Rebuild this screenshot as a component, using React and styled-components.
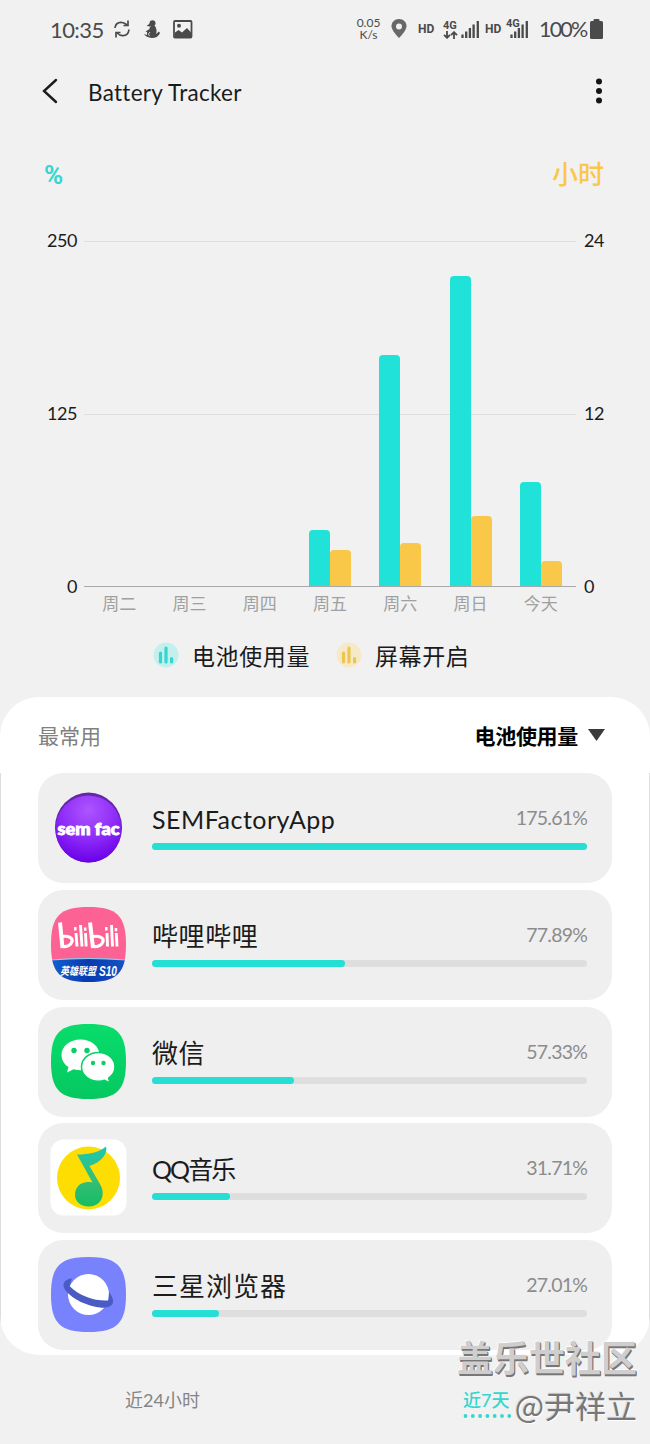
import styled, { createGlobalStyle } from "styled-components";

const days = [
	{ name: "周二", battery: 0, screen: 0 },
	{ name: "周三", battery: 0, screen: 0 },
	{ name: "周四", battery: 0, screen: 0 },
	{ name: "周五", battery: 56, screen: 36 },
	{ name: "周六", battery: 231, screen: 43 },
	{ name: "周日", battery: 310, screen: 70 },
	{ name: "今天", battery: 104, screen: 25 }
];

const squircle = "M37.5 0C66 0 75 9 75 37.5S66 75 37.5 75 0 66 0 37.5 9 0 37.5 0Z";

const SemIcon = () => (
	<svg width="75" height="75" viewBox="0 0 75 75">
		<defs>
			<radialGradient id="sem" cx="50%" cy="22%" r="78%">
				<stop offset="0" stopColor="#ac55ff" />
				<stop offset="0.55" stopColor="#8e2bf8" />
				<stop offset="1" stopColor="#6a00e8" />
			</radialGradient>
		</defs>
		<ellipse cx="37.5" cy="37.5" rx="33.5" ry="35" fill="#6527a8" />
		<ellipse cx="37.5" cy="39" rx="33" ry="33.5" fill="url(#sem)" />
		<text x="37.5" y="44.5" textAnchor="middle" textLength="62" lengthAdjust="spacingAndGlyphs" fill="#fff" stroke="#fff" strokeWidth="0.9" fontFamily="Lato, sans-serif" fontWeight="900" fontSize="16.5">
			sem fac
		</text>
	</svg>
);

const BiliIcon = () => (
	<svg width="75" height="75" viewBox="0 0 75 75">
		<defs>
			<clipPath id="biliClip">
				<path d={squircle} />
			</clipPath>
			<linearGradient id="biliBlue" x1="0" x2="1">
				<stop offset="0" stopColor="#0f62d0" />
				<stop offset="0.5" stopColor="#0a39ae" />
				<stop offset="1" stopColor="#0f56c8" />
			</linearGradient>
		</defs>
		<g clipPath="url(#biliClip)">
			<rect width="75" height="75" fill="#fc6293" />
			<path d="M0 53Q37 50 75 53V75H0Z" fill="url(#biliBlue)" />
			<path d="M0 53Q37 50 75 53" fill="none" stroke="#8ccdf5" strokeWidth="1.2" />
		</g>
		<g fill="none" stroke="#fff">
			<path d="M9 15.5L11.5 41M39 15.5L42 41" strokeWidth="4" />
			<path d="M11 29.5C18 28.5 22 31 21 34.5S16 40 11 39.5M42 29.5C49 28.5 53 31 52 34.5S47 40 42 39.5" strokeWidth="3.2" />
			<path d="M25 26L26 39.5M29.5 18L31 39.5M34.5 26L35.2 39.5M56 26L56.5 39.5M60.500 18L61.500 39.500M65.300 26L66 39.500" strokeWidth="2.900" />
			<path d="M24.300 20V23.500M34.200 20.500V23.800M55.300 20V23.500M65 21V24.300" strokeWidth="2.500" />
		</g>
		<text x="9" y="67.500" textLength="36" lengthAdjust="spacingAndGlyphs" fill="#fff" fontFamily="Noto Sans CJK SC, sans-serif" fontWeight="700" fontStyle="italic" fontSize="11">
			英雄联盟
		</text>
		<text x="48" y="69" textLength="18" lengthAdjust="spacingAndGlyphs" fill="#fff" fontFamily="Liberation Sans, sans-serif" fontWeight="700" fontStyle="italic" fontSize="15.500">
			S10
		</text>
	</svg>
);

const WechatIcon = () => (
	<svg width="75" height="75" viewBox="0 0 75 75">
		<defs>
			<linearGradient id="wx" x2="0" y2="1">
				<stop offset="0" stopColor="#08dd6b" />
				<stop offset="1" stopColor="#05c860" />
			</linearGradient>
		</defs>
		<path d={squircle} fill="url(#wx)" />
		<path d="M29.500 15.500C18.800 15.500 10.500 22.300 10.500 31C10.500 36 13.200 40.200 17.500 43L16 48.500L22.500 45.300Q26 46.300 30 46.300C40 46 48.500 39.500 48.500 31C48.500 22.300 40 15.500 29.500 15.500Z" fill="#fff" />
		<path d="M47.500 28.500C38 28.500 30.500 34.800 30.500 43C30.500 51 38 57.200 47.500 57.200Q50.500 57.200 53.500 56.300L59 59L57.600 54C61.500 51.300 64 47.300 64 43C64 34.800 57 28.500 47.500 28.500Z" fill="#fff" stroke="#06d166" strokeWidth="1.500" />
		<g fill="#07cf65">
			<circle cx="23" cy="26.500" r="2.700" />
			<circle cx="36" cy="26.500" r="2.700" />
			<circle cx="42" cy="39" r="2.200" />
			<circle cx="52.500" cy="39" r="2.200" />
		</g>
	</svg>
);

const MusicIcon = () => (
	<svg width="77" height="77" viewBox="0 0 77 77">
		<defs>
			<linearGradient id="note" x2="0" y2="1">
				<stop offset="0" stopColor="#1dc8b0" />
				<stop offset="0.550" stopColor="#35be78" />
				<stop offset="1" stopColor="#15bd62" />
			</linearGradient>
		</defs>
		<rect x="0.500" y="0.500" width="76" height="76" rx="13" fill="#fff" />
		<circle cx="38.500" cy="39" r="31.500" fill="#fedd02" />
		<path d="M56 7.500C58 14 52 23 39.500 27L50.500 46C56 56 51 67.500 39 67.500C30 67.500 25 62 25 56C25 47 32 41.500 42.500 43.500L27 15.500C39 15.500 49 13.500 56 7.500Z" fill="url(#note)" />
	</svg>
);

const BrowserIcon = () => (
	<svg width="75" height="75" viewBox="0 0 75 75">
		<path d={squircle} fill="#7782fc" />
		<circle cx="37.500" cy="37.500" r="20.500" fill="#fff" />
		<path d="M21 21.500C12 22.500 10.500 28 15 34C22 42.500 36 49 49 50.500C58 51.500 63 48 62 43.500C61.500 40 60 37.500 58 35L57.500 43.500C45 44.500 28 39 18.500 29Z" fill="#4a5bc4" />
	</svg>
);

const apps = [
	{ name: "SEMFactoryApp", percent: "175.61%", fill: 100, icon: <SemIcon />, size: 25, spacing: 0.5 },
	{ name: "哔哩哔哩", percent: "77.89%", fill: 44.3, icon: <BiliIcon />, size: 26, spacing: 0.6 },
	{ name: "微信", percent: "57.33%", fill: 32.7, icon: <WechatIcon />, size: 26, spacing: 0.4 },
	{ name: "QQ音乐", percent: "31.71%", fill: 18, icon: <MusicIcon />, size: 25, spacing: -1.9 },
	{ name: "三星浏览器", percent: "27.01%", fill: 15.4, icon: <BrowserIcon />, size: 26, spacing: 1 }
];

const SignalBars = () => (
	<svg width="19" height="20" viewBox="0 0 19 20" stroke="#4a4a4a" strokeWidth="2.300">
		<path d="M1.500 15.500V19M5.200 12.500V19M8.900 9V19M12.600 5.500V19M16.800 2V19" />
	</svg>
);

const LegendMark = ({ color, back }) => (
	<svg width="26" height="26" viewBox="0 0 26 26">
		<circle cx="13" cy="13" r="12.500" fill={back} />
		<path d="M7.500 11V20M13 6V20M18.600 16.500V20" stroke={color} strokeWidth="3.200" strokeLinecap="round" />
	</svg>
);

export default function App() {
	return (
		<>
			<GlobalStyle />
			<Screen>
				<StatusBar>
					<Clock>10:35</Clock>
					<svg width="18" height="18" viewBox="0 0 18 18" fill="none" stroke="#4a4a4a" strokeWidth="1.700">
						<path d="M2 8C2.500 4 5.500 2.200 9 2.500Q11.500 2.800 14 5M16 9.500C15.500 13.500 13 15.800 9.500 15.600Q6.500 15.400 4 13" />
						<path d="M3 17.500V12.500H7.500M15 0.500V5.500H10.500" />
					</svg>
					<Goose width="16" height="19" viewBox="0 0 16 19">
						<circle cx="8.500" cy="3.200" r="3" fill="#4a4a4a" />
						<path d="M6.500 3L2.500 6L7 6.500ZM6 6H11Q13.500 10 12 14L15 11.500L16 13Q14 18 8 18Q2 17.500 0 14L3 15V12L1.500 11.500L5.500 9Z" fill="#4a4a4a" />
						<path d="M6 12Q3 14 5.500 16" fill="none" stroke="#f1f1f1" strokeWidth="0.800" />
					</Goose>
					<svg width="20" height="19" viewBox="0 0 20 19">
						<rect x="1" y="1" width="17.500" height="16.500" rx="1" fill="none" stroke="#4a4a4a" strokeWidth="1.800" />
						<circle cx="6" cy="5.800" r="2" fill="#4a4a4a" />
						<path d="M2 12.500L5.500 10L9 12.500L14 8L18 12.500V17H2Z" fill="#4a4a4a" />
					</svg>
					<StatusRight>
						<Speed>
							<span>0.05</span>
							<span>K/s</span>
						</Speed>
						<Pin width="16" height="20" viewBox="0 0 16 20">
							<path d="M8 0C3.500 0 0.500 3.300 0.500 7.300C0.500 12 8 19 8 19S15.500 12 15.500 7.300C15.500 3.300 12.500 0 8 0Z" fill="#686868" />
							<circle cx="8" cy="7.500" r="3" fill="#f1f1f1" />
						</Pin>
						<Hd>HD</Hd>
						<Network>
							<Generation>4G</Generation>
							<svg width="15" height="8" viewBox="0 0 15 8" fill="none" stroke="#4a4a4a" strokeWidth="1.800">
								<path d="M4 0V7M1 3.800L4 6.800L7 3.800M11 8V1M8 4.200L11 1.200L14 4.200" />
							</svg>
						</Network>
						<SignalBars />
						<Hd $second>HD</Hd>
						<Overlap>
							<Generation $over>4G</Generation>
							<SignalBars />
						</Overlap>
						<Charge>100%</Charge>
						<svg width="13" height="20" viewBox="0 0 13 20" fill="#4a4a4a">
							<rect y="2" width="13" height="18" rx="1.500" />
							<rect x="3.500" width="6" height="4" rx="1" />
						</svg>
					</StatusRight>
				</StatusBar>

				<TitleBar>
					<svg width="16" height="26" viewBox="0 0 16 26" fill="none" stroke="#1b1b1b" strokeWidth="2.400" strokeLinecap="round">
						<path d="M14 2L2 13L14 24" />
					</svg>
					<Title>Battery Tracker</Title>
					<svg width="8" height="26" viewBox="0 0 8 26" fill="#151515">
						<circle cx="4" cy="3.500" r="3" />
						<circle cx="4" cy="13" r="3" />
						<circle cx="4" cy="22.500" r="3" />
					</svg>
				</TitleBar>

				<Units>
					<Percent>%</Percent>
					<Hours>小时</Hours>
				</Units>

				<Chart>
					<Axis $align="right">
						<span>250</span>
						<span>125</span>
						<span>0</span>
					</Axis>
					<Plot>
						{days.map((day) => (
							<Day key={day.name}>
								<Bar $color="#20e2d9" style={{ height: day.battery }} />
								<Bar $color="#fac848" style={{ height: day.screen }} />
							</Day>
						))}
					</Plot>
					<Axis>
						<span>24</span>
						<span>12</span>
						<span>0</span>
					</Axis>
				</Chart>
				<DayNames>
					{days.map((day) => (
						<span key={day.name}>{day.name}</span>
					))}
				</DayNames>

				<Legend>
					<LegendMark color="#35d6cf" back="#c3f0ec" />
					<LegendText>电池使用量</LegendText>
					<LegendMark color="#edc550" back="#f6e9c8" />
					<LegendText>屏幕开启</LegendText>
				</Legend>

				<Sheet>
					<SheetHeader>
						<Most>最常用</Most>
						<Sort>
							电池使用量
							<svg width="17" height="12" viewBox="0 0 17 12" fill="#3b3b3b">
								<path d="M0 0H17L8.500 12Z" />
							</svg>
						</Sort>
					</SheetHeader>
					<AppList>
						{apps.map((app) => (
							<AppCard key={app.name}>
								<AppIcon>{app.icon}</AppIcon>
								<AppInfo>
									<AppLine>
										<AppName $size={app.size} $spacing={app.spacing}>
											{app.name}
										</AppName>
										<AppPercent>{app.percent}</AppPercent>
									</AppLine>
									<Track>
										<Fill style={{ width: `${app.fill}%` }} />
									</Track>
								</AppInfo>
							</AppCard>
						))}
					</AppList>
				</Sheet>

				<Tabs>
					<Tab>近24小时</Tab>
					<ActiveTab>
						近7天
						<svg width="50" height="4" viewBox="0 0 50 4" fill="#35d6cf">
							{[0, 1, 2, 3, 4, 5, 6].map((i) => (
								<circle key={i} cx={2.5 + i * 7.3} cy="2" r="1.900" />
							))}
						</svg>
					</ActiveTab>
				</Tabs>

				<Watermark>
					<Community>盖乐世社区</Community>
					<Author>@尹祥立</Author>
				</Watermark>
			</Screen>
		</>
	);
}

const GlobalStyle = createGlobalStyle`
	body {
		margin: 0;
		background: #f1f1f1;
	}

	* {
		box-sizing: border-box;
	}

	svg {
		display: block;
		flex: none;
	}
`;

const Screen = styled.div`
	position: relative;
	width: 650px;
	height: 1444px;
	overflow: hidden;
	background: #f1f1f1;
	color: #1b1b1b;
	font-family: Lato, "Noto Sans CJK SC", sans-serif;
	font-weight: 400;
	white-space: nowrap;
`;

const StatusBar = styled.div`
	display: flex;
	align-items: center;
	height: 58px;
	padding: 0 47px 0 50px;
	color: #4a4a4a;
`;

const Clock = styled.div`
	width: 63px;
	font-size: 22px;
	letter-spacing: -0.6px;
`;

const Goose = styled.svg`
	margin: 0 13px 0 13px;
`;

const StatusRight = styled.div`
	display: flex;
	align-items: center;
	margin-left: auto;
`;

const Speed = styled.div`
	display: flex;
	flex-direction: column;
	align-items: center;
	width: 25px;
	font-size: 12px;
	line-height: 12px;
`;

const Pin = styled.svg`
	margin: 0 11px 0 10px;
`;

const Hd = styled.div`
	width: ${(props) => (props.$second ? "21px" : "25px")};
	margin-left: ${(props) => (props.$second ? "5px" : "0")};
	font-family: Roboto, sans-serif;
	font-size: 12px;
	font-weight: 700;
	line-height: 16px;
`;

const Network = styled.div`
	display: flex;
	flex-direction: column;
	width: 18px;
`;

const Generation = styled.div`
	position: ${(props) => (props.$over ? "absolute" : "static")};
	left: 0;
	top: -1px;
	font-family: Roboto, sans-serif;
	font-size: 11px;
	font-weight: 700;
	line-height: 11px;
`;

const Overlap = styled.div`
	position: relative;
	padding-left: 4px;
`;

const Charge = styled.div`
	width: 51px;
	margin-left: 10px;
	font-size: 21.5px;
	letter-spacing: -1.8px;
`;

const TitleBar = styled.div`
	display: flex;
	align-items: center;
	height: 66px;
	padding: 0 47px 0 42px;
`;

const Title = styled.div`
	flex: 1;
	padding: 2px 0 0 30px;
	font-size: 22.5px;
	letter-spacing: 0.3px;
`;

const Units = styled.div`
	display: flex;
	justify-content: space-between;
	align-items: center;
	height: 100px;
	padding: 0 46px 0 44px;
`;

const Percent = styled.div`
	margin-top: 2px;
	color: #35d6cf;
	font-family: Roboto, sans-serif;
	font-size: 26px;
	font-weight: 700;
	letter-spacing: -1px;
`;

const Hours = styled.div`
	color: #fac848;
	font-size: 26px;
	font-weight: 500;
	line-height: 38px;
`;

const Chart = styled.div`
	display: flex;
	height: 362px;
	padding: 7px 0 0 40px;
`;

const Axis = styled.div`
	display: flex;
	flex-direction: column;
	flex: none;
	justify-content: space-between;
	width: ${(props) => (props.$align === "right" ? "37px" : "28px")};
	margin-left: ${(props) => (props.$align === "right" ? "0" : "8px")};
	height: 364px;
	font-size: 18px;
	line-height: 18px;
	letter-spacing: -0.4px;
	text-align: ${(props) => props.$align || "left"};
`;

const Plot = styled.div`
	display: flex;
	flex: none;
	width: 492px;
	height: 347px;
	margin: 9px 0 0 7px;
	border-bottom: 1px solid #a8a8a8;
	background: linear-gradient(#dedede, #dedede) 0 1px / 100% 1px no-repeat,
		linear-gradient(#dedede, #dedede) 0 174px / 100% 1px no-repeat;
`;

const Day = styled.div`
	display: flex;
	flex: 1;
	align-items: flex-end;
	justify-content: center;
`;

const Bar = styled.div`
	width: 21px;
	border-radius: 4px 4px 0 0;
	background: ${(props) => props.$color};
`;

const DayNames = styled.div`
	display: flex;
	width: 492px;
	margin: 6px 0 0 84px;
	color: #a0a0a0;
	font-size: 17px;
	line-height: 24px;

	span {
		flex: 1;
		text-align: center;
	}
`;

const Legend = styled.div`
	display: flex;
	align-items: center;
	height: 40px;
	margin: 19px 0 0 153px;
`;

const LegendText = styled.div`
	width: 144px;
	margin-left: 13px;
	font-size: 23px;
	letter-spacing: 0.6px;
`;

const Sheet = styled.div`
	height: 658px;
	margin-top: 22px;
	border-radius: 39px;
	background: #ffffff;
	overflow: hidden;
`;

const SheetHeader = styled.div`
	display: flex;
	align-items: center;
	justify-content: space-between;
	height: 76px;
	padding: 0 45px 1px 38px;
`;

const Most = styled.div`
	color: #808080;
	font-size: 21px;
`;

const Sort = styled.div`
	display: flex;
	align-items: center;
	gap: 10px;
	color: #000000;
	font-size: 21px;
	font-weight: 700;
	letter-spacing: -0.3px;
`;

const AppList = styled.div`
	display: flex;
	flex-direction: column;
	gap: 6.8px;
	padding: 0 37px;
	border: solid #dddddd;
	border-width: 0 1px;
`;

const AppCard = styled.div`
	display: flex;
	flex: none;
	height: 110px;
	border-radius: 25px;
	background: #efefef;
`;

const AppIcon = styled.div`
	display: flex;
	align-items: center;
	justify-content: center;
	width: 101px;
	padding-bottom: 1px;
`;

const AppInfo = styled.div`
	width: 435px;
	margin-left: 13px;
`;

const AppLine = styled.div`
	display: flex;
	align-items: center;
	justify-content: space-between;
	height: 70px;
	padding-top: 22px;
`;

const AppName = styled.div`
	font-size: ${(props) => props.$size}px;
	letter-spacing: ${(props) => props.$spacing}px;
	line-height: 46px;
`;

const AppPercent = styled.div`
	color: #8c8c8c;
	font-size: 19.5px;
	line-height: 44px;
	margin-top: -2px;
	letter-spacing: -0.8px;
`;

const Track = styled.div`
	height: 7px;
	border-radius: 4px;
	background: #dedede;
`;

const Fill = styled.div`
	height: 7px;
	border-radius: 4px;
	background: #25dfd5;
`;

const Tabs = styled.div`
	display: flex;
	justify-content: space-between;
	height: 88px;
	padding: 31px 138px 0 125px;
`;

const Tab = styled.div`
	color: #858585;
	font-size: 18px;
	line-height: 28px;
`;

const ActiveTab = styled.div`
	width: 49px;
	color: #35d6cf;
	font-size: 18px;
	font-weight: 500;
	line-height: 28px;
`;

const Watermark = styled.div`
	position: absolute;
	right: 13px;
	top: 1333px;
	display: flex;
	flex-direction: column;
	align-items: flex-end;
	font-family: "Noto Sans CJK SC", sans-serif;
`;

const Community = styled.div`
	color: #cfcdcd;
	font-size: 36px;
	font-weight: 700;
	line-height: 46px;
	text-shadow: 1px 1px 0 #777777, 1px 2px 0 #777777, -1px -1px 0 #fafafa;
`;

const Author = styled.div`
	color: #777777;
	font-size: 31px;
	line-height: 46px;
	margin-top: 3px;
	text-shadow: -1px -1px 0 #dddddd, 1px 1px 0 #ffffff;
`;
